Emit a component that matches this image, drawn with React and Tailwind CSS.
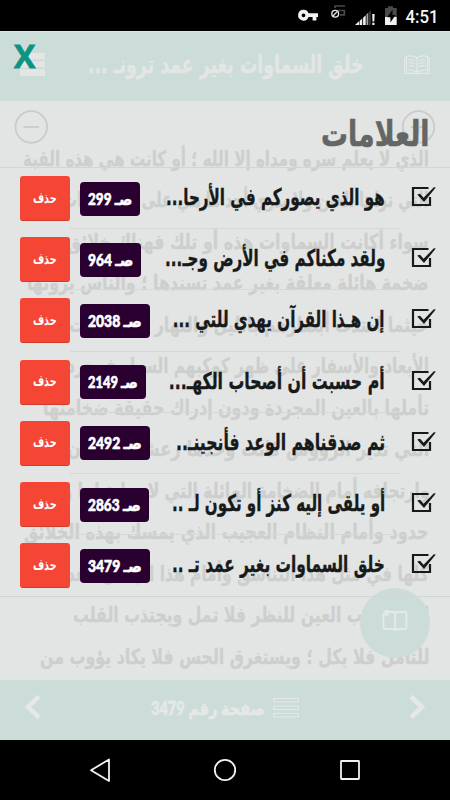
import React, { useLayoutEffect, useRef } from 'react';

// Keeps a line of Arabic text on one line and condenses it to a given width
function FitText({ w, className = '', children }) {
  const ref = useRef(null);
  useLayoutEffect(() => {
    const el = ref.current;
    el.style.transform = `scaleX(${w / el.offsetWidth})`;
  }, [w]);
  return (
    <div dir="rtl" className="flex-none text-right" style={{ width: w }}>
      <span ref={ref} className={`inline-block whitespace-nowrap origin-right ${className}`}>{children}</span>
    </div>
  );
}

const pageLines = [
  { w: 406, text: 'الذي لا يعلم سره ومداه إلا الله ؛ أو كانت هي هذه القبة' },
  { w: 366, text: 'التي تراها العين ولا يدري أحد ما هي على وجه الثبات' },
  { w: 362, text: 'سواء أكانت السماوات هذه أو تلك فهناك خلائق' },
  { w: 402, text: 'ضخمة هائلة معلقة بغير عمد تسندها ؛ والناس يرونها' },
  { w: 360, text: 'حيثما امتدت أبصارهم بالليل والنهار ومهما نأت' },
  { w: 362, text: 'الأبعاد والأسفار على ظهر كوكبهم السيار فمجرد' },
  { w: 386, text: 'تأملها بالعين المجردة ودون إدراك حقيقة ضخامتها' },
  { w: 362, text: 'التي تدير الرؤوس كانت وحدها رعشة الإنسان' },
  { w: 378, text: 'وارتجافه أمام الضخامة الهائلة التي لا نهاية لها ولا' },
  { w: 405, text: 'حدود وأمام النظام العجيب الذي يمسك بهذه الخلائق' },
  { w: 362, text: 'كلها في مثل هذا التناسق وأمام هذا الجمال فقد' },
  { w: 356, text: 'الذي يجذب العين للنظر فلا تمل ويجتذب القلب' },
  { w: 389, text: 'للتأمل فلا يكل ؛ ويستغرق الحس فلا يكاد يؤوب من' },
];

const bookmarks = [
  { page: 299, box: 60, w: 219, text: 'هو الذي يصوركم في الأرحا...' },
  { page: 964, box: 61, w: 220, text: 'ولقد مكناكم في الأرض وجـ...' },
  { page: 2038, box: 70, w: 212, text: 'إن هـذا القرآن يهدي للتي ...' },
  { page: 2149, box: 66, w: 216, text: 'أم حسبت أن أصحاب الكهـ...' },
  { page: 2492, box: 70, w: 209, text: 'ثم صدقناهم الوعد فأنجينـ..' },
  { page: 2863, box: 69, w: 213, text: 'أو يلقى إليه كنز أو تكون لـ ..' },
  { page: 3479, box: 70, w: 213, text: 'خلق السماوات بغير عمد تـ ..' },
];

function StatusBar() {
  return (
    <div className="h-[31px] bg-black flex-none">
      <svg width="450" height="31" viewBox="0 0 450 31">
        <g fill="#f2f2f2">
          <path fillRule="evenodd" d="M303.5 9.8a5.4 5.4 0 1 0 5.1 7.2h4v3.4h3.8V17h1.6v-3.8h-9.4a5.4 5.4 0 0 0-5.1-3.4zm0 3.6a1.9 1.9 0 1 1 0 3.800 1.9 1.9 0 0 1 0-3.800z" />
          <path d="M355 25l4-3.7V25z" />
          <path d="M359.600 20.900l2.600-2.400V25h-2.600zM363.100 17.700l2.600-2.400V25h-2.600z" />
          <path d="M372.2 14h2.4l-.3 7.4h-1.8zM372.3 22.7h2.2V25h-2.2z" />
        </g>
        <path d="M366.5 14.4l1.8-1.800V25h-1.800z" fill="#a5a5a5" />
        <path d="M369 12l1.800-2V25H369z" fill="#3a3a3a" />
        <g fill="none" stroke="#4a4a4a" strokeWidth="1.7">
          <path d="M335 8V6h10M338 10.5h6.300v4.300H340" />
        </g>
        <circle cx="335.2" cy="13.7" r="3.4" fill="#000" stroke="#eee" strokeWidth="1.3" />
        <path d="M337.3 11.6l-4.2 4.2" stroke="#eee" strokeWidth="1.3" />
        <path d="M385 8h3V6.2h5V8h3.700v9H385z" fill="#4a4a4a" />
        <path d="M385 17h11.700v8H385z" fill="#f2f2f2" />
        <path d="M392.5 9.5l-5.2 7.800h3.100v5.200l5.200-7.600h-3.100z" fill="#000" />
        <text x="405.5" y="22.8" textLength="33" lengthAdjust="spacingAndGlyphs" fontFamily="Roboto, sans-serif" fontWeight="500" fontSize="18" fill="#f5f5f5">4:51</text>
      </svg>
    </div>
  );
}

function Header() {
  return (
    <header className="h-[70px] flex-none bg-[#ccddd9] border-t border-[#dbe5e2] flex items-start justify-between pl-[14px] pr-[20px]">
      <div className="relative w-[31px] h-[46px]">
        <svg className="absolute left-[6px] top-[21px]" width="25" height="24" viewBox="0 0 25 24" fill="#e3e6e5">
          <path d="M0 0h25v6.5H0zM0 8.2h25v6.3H0zM0 16.2h25V23H0z" />
        </svg>
        <span className="absolute left-0 top-[4px] font-['Open_Sans',sans-serif] font-bold text-[32px] leading-[40px] text-[#0c9382] [-webkit-text-stroke:0.8px]">X</span>
      </div>
      <div className="flex items-start pt-[14px] gap-[41px]">
        <FitText w={276} className="font-['DejaVu_Sans',sans-serif] font-bold text-[25px] leading-[38px] text-[#e3e6e5] [-webkit-text-stroke:0.5px]">
          خلق السماوات بغير عمد ترونـ ...
        </FitText>
        <svg className="mt-[9px]" width="26" height="20" viewBox="0 0 26 20" fill="none" stroke="#e5e8e7" strokeWidth="1.2">
          <path d="M13 3Q8-.5 2.5 1.5v14Q8 14 13 17.3 18 14 23.5 15.5v-14Q18-.5 13 3zM13 3v14" />
          <path d="M2.5 3H.7v15.3h10.5q1.8 1.2 3.6 0h10.5V3h-1.8" />
          <path d="M4.5 5q3.5-1 6.5.8M4.5 8q3.5-1 6.5.8M4.5 11q3.5-1 6.5.8M15 5.8q3-1.8 6.5-.8M15 8.8q3-1.8 6.5-.8M15 11.8q3-1.8 6.5-.8" />
        </svg>
      </div>
    </header>
  );
}

function Bookmark({ item, last }) {
  return (
    <li className="relative h-[61.2px] flex items-center justify-between pl-[20px] pr-[13px]">
      <div className="flex items-center gap-[10px]">
        <button className="w-[50px] h-[45px] rounded-[3px] bg-[#f54635] border-b border-[#d23a2b] flex items-center justify-center pb-[3px]">
          <FitText w={24} className="font-['DejaVu_Sans',sans-serif] font-bold text-[14.5px] leading-[20px] text-white">حذف</FitText>
        </button>
        <div className="h-[34px] rounded-[4px] bg-[#29002f] flex items-center justify-center" style={{ width: item.box }}>
          <FitText w={item.box - 16} className="font-['Lato','DejaVu_Sans',sans-serif] font-black text-[16.5px] leading-[24px] text-white [-webkit-text-stroke:0.6px]">
            صـ {item.page}
          </FitText>
        </div>
      </div>
      <div className="flex items-center gap-[26px]">
        <FitText w={item.w} className="font-['DejaVu_Sans',sans-serif] font-bold text-[23px] leading-[32px] pb-[3px] text-[#171a1a] [-webkit-text-stroke:0.4px]">{item.text}</FitText>
        <svg className="flex-none mb-[3px]" width="26" height="22" viewBox="0 0 26 22">
          <path d="M17.5 2H2v17h17v-8" fill="none" stroke="#171a1a" strokeWidth="2.2" />
          <path d="M6.200 8.600l2.800-.8 3.600 4L22.800 1.200l2 .4L13 16z" fill="#171a1a" />
        </svg>
      </div>
      {!last && <div className="absolute bottom-0 left-[70px] right-[50px] h-px bg-[#d6d8d7]" />}
    </li>
  );
}

export default function App() {
  return (
    <div className="w-[450px] h-[800px] flex flex-col overflow-hidden bg-[#e3e5e4]">
      <StatusBar />
      <Header />

      <main className="relative h-[579px] flex-none overflow-hidden">
        {/* faded reading page behind the list */}
        <div className="absolute inset-0">
          <svg className="absolute left-[14px] top-[8px]" width="422" height="36" viewBox="0 0 422 36" fill="none" stroke="#c9cbca" strokeWidth="1.8">
            <circle cx="17.3" cy="18" r="15.8" />
            <path d="M9.5 18h15.5" />
            <circle cx="404.5" cy="18" r="15.8" />
            <path d="M397 18h15M404.5 10.5v15" />
          </svg>
          <div className="pt-[37px] pr-[21px] flex flex-col items-end">
            {pageLines.map((line) => (
              <div key={line.text} className="h-[41.5px] flex items-center">
                <FitText w={line.w} className="font-['DejaVu_Sans',sans-serif] font-bold text-[21px] leading-[34px] text-[#cdcfce] [-webkit-text-stroke:0.3px]">{line.text}</FitText>
              </div>
            ))}
          </div>
          <div className="absolute left-[360px] top-[487px] size-[70px] rounded-full bg-[#ccddd9] flex items-center justify-center pb-[5px]">
            <svg width="26" height="22" viewBox="0 0 26 22" fill="none" stroke="#e5e9e8" strokeWidth="1.8">
              <path d="M6 2h5q2 0 2 2 0-2 2-2h8q1.500 0 1.500 1.500V18q0 1-1.500 1h-8q-2 2.400-4 0H3q-1.500 0-1.500-1.500V3M13 4v15" />
              <path d="M2.500 0h4v6.500l-2-1.500-2 1.500z" fill="#e5e9e8" stroke="none" />
            </svg>
          </div>
        </div>

        <section className="relative">
          <div className="h-[67px] border-b border-[#d3d5d4] flex justify-end pr-[21px] pt-[8px]">
            <FitText w={108} className="font-['DejaVu_Sans',sans-serif] font-bold text-[35px] leading-[50px] text-[#646665] [-webkit-text-stroke:0.6px]">العلامات</FitText>
          </div>
          <ul className="border-b border-[#d3d5d4]">
            {bookmarks.map((item, i) => (
              <Bookmark key={item.page} item={item} last={i === bookmarks.length - 1} />
            ))}
          </ul>
        </section>
      </main>

      <footer className="h-[60px] flex-none bg-[#ccddd9] flex items-center justify-between px-[24px] pb-[6px]">
        <svg width="18" height="26" viewBox="0 0 18 26" fill="none" stroke="#e5e8e7" strokeWidth="4.5">
          <path d="M15 2.5L4 13l11 10.5" />
        </svg>
        <div className="flex items-center gap-[8px] pt-[2px]">
          <FitText w={114} className="font-['Lato','DejaVu_Sans',sans-serif] font-black text-[18px] leading-[28px] text-[#e5e8e7] [-webkit-text-stroke:0.6px]">صفحة رقم 3479</FitText>
          <svg width="26" height="20" viewBox="0 0 26 20" fill="none" stroke="#e5e8e7" strokeWidth="1">
            <path d="M.5.5h25v3.500H.5zM.5 8h25v3.500H.5zM.5 15.500h25V19H.5z" />
          </svg>
        </div>
        <svg width="18" height="26" viewBox="0 0 18 26" fill="none" stroke="#e5e8e7" strokeWidth="4.5">
          <path d="M3 2.5L14 13 3 23.5" />
        </svg>
      </footer>

      <nav className="h-[60px] flex-none bg-black">
        <svg width="450" height="60" viewBox="0 0 450 60" fill="none" stroke="#f2f2f2" strokeWidth="1.8">
          <path d="M109 19.5v21.5L91 30.2z" strokeLinejoin="round" />
          <circle cx="225" cy="30" r="10.2" />
          <rect x="341" y="21" width="18" height="18" rx="0.5" />
        </svg>
      </nav>
    </div>
  );
}
